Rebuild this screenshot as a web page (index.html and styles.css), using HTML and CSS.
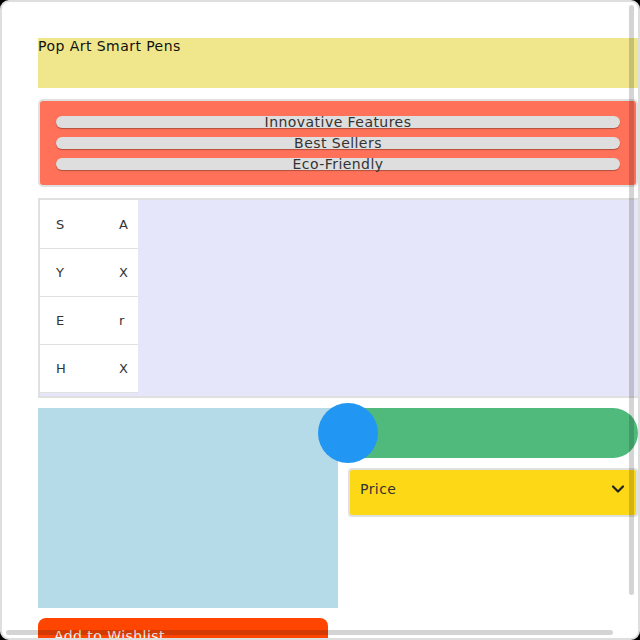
FILE: index.html
```html
<!DOCTYPE html>
<html>
<head>
<meta charset="utf-8">
<link rel="stylesheet" href="styles.css">
</head>
<body>
<div class="frame">
  <div class="viewport">
    <div class="content">
      <header class="banner">Pop Art Smart Pens</header>
      <nav class="nav">
        <a class="pill">Innovative Features</a>
        <a class="pill">Best Sellers</a>
        <a class="pill">Eco-Friendly</a>
      </nav>
      <section class="grid-section">
        <table class="letters">
          <tr><td class="c1">S</td><td class="c2">A</td></tr>
          <tr><td class="c1">Y</td><td class="c2">X</td></tr>
          <tr><td class="c1">E</td><td class="c2">r</td></tr>
          <tr><td class="c1">H</td><td class="c2">X</td></tr>
        </table>
      </section>
      <section class="product">
        <div class="image"></div>
        <div class="side">
          <div class="track"></div>
          <div class="dot"></div>
          <div class="select">
            <span>Price</span>
            <svg class="chev" width="14" height="10" viewBox="0 0 14 10"><polyline points="2,2.5 7,7.5 12,2.5" fill="none" stroke="#222" stroke-width="2.2" stroke-linecap="round" stroke-linejoin="round"/></svg>
          </div>
        </div>
      </section>
      <button class="wish">Add to Wishlist</button>
    </div>
  </div>
  <div class="vbar"></div>
  <div class="hbar"></div>
</div>
</body>
</html>
```
FILE: styles.css
```css
html, body {
  margin: 0;
  padding: 0;
  background: #000;
}
.frame {
  position: relative;
  width: 640px;
  height: 640px;
  box-sizing: border-box;
  border: 2px solid #dedede;
  border-radius: 9px;
  background: #fff;
  overflow: hidden;
  font-family: "DejaVu Sans", "Open Sans", sans-serif;
  letter-spacing: 0.45px;
}
.viewport {
  width: 100%;
  height: 100%;
  overflow: hidden;
}
.content {
  width: 620px;
  padding: 36px 0 0 36px;
  display: flex;
  flex-direction: column;
}
.banner {
  height: 50px;
  background: #f0e68c;
  color: #111;
  font-size: 14px;
  line-height: 16px;
}
.nav {
  margin-top: 11px;
  width: 600px;
  box-sizing: border-box;
  border: 2px solid #e0e0e0;
  border-radius: 5px;
  background: #ff7158;
  padding: 15px 16px;
  display: flex;
  flex-direction: column;
  gap: 9px;
}
.pill {
  display: block;
  height: 12px;
  line-height: 12px;
  border-radius: 6px;
  background: #dedede;
  box-shadow: 0 1px 1px rgba(0,0,0,0.3);
  color: #333;
  font-size: 14px;
  text-align: center;
}
.grid-section {
  margin-top: 11px;
  height: 200px;
  box-sizing: border-box;
  border: 2px solid #e0e0e0;
  border-right: none;
  background: #e6e6fa;
}
.letters {
  border-collapse: collapse;
  background: #fff;
  color: #333;
  font-size: 13px;
}
.letters td {
  height: 47px;
  padding: 0;
  border-bottom: 1px solid #e0e0e0;
  vertical-align: middle;
}
.letters tr:first-child td {
  height: 48px;
}
.letters .c1 {
  width: 47px;
  padding-left: 16px;
}
.letters .c2 {
  width: 10px;
  padding-left: 16px;
  padding-right: 9px;
}
.product {
  margin-top: 10px;
  display: flex;
}
.image {
  width: 300px;
  height: 200px;
  background: #b5dae8;
}
.side {
  position: relative;
  width: 300px;
}
.track {
  height: 50px;
  border-radius: 25px;
  background: #4fba7c;
}
.dot {
  position: absolute;
  left: -20px;
  top: -5px;
  width: 60px;
  height: 60px;
  border-radius: 50%;
  background: #2196f3;
}
.select {
  margin: 10px 0 0 10px;
  height: 49px;
  box-sizing: border-box;
  border: 2px solid #e0e0e0;
  border-radius: 4px;
  background: #fdd817;
  padding: 0 11px 8px 10px;
  display: flex;
  align-items: center;
  justify-content: space-between;
  color: #333;
  font-size: 14px;
}
.chev {
  display: block;
}
.wish {
  margin-top: 10px;
  width: 290px;
  border: none;
  border-radius: 8px;
  background: #ff4500;
  color: #fff;
  font-family: inherit;
  letter-spacing: inherit;
  font-size: 14px;
  text-align: left;
  padding: 10px 16px;
  line-height: 16px;
  display: block;
  align-self: flex-start;
}
.vbar {
  position: absolute;
  left: 627px;
  top: 3px;
  width: 5px;
  height: 590px;
  border-radius: 3px;
  background: rgba(0,0,0,0.17);
}
.hbar {
  position: absolute;
  left: 4px;
  top: 628px;
  width: 607px;
  height: 5px;
  border-radius: 3px;
  background: rgba(0,0,0,0.17);
}
```
